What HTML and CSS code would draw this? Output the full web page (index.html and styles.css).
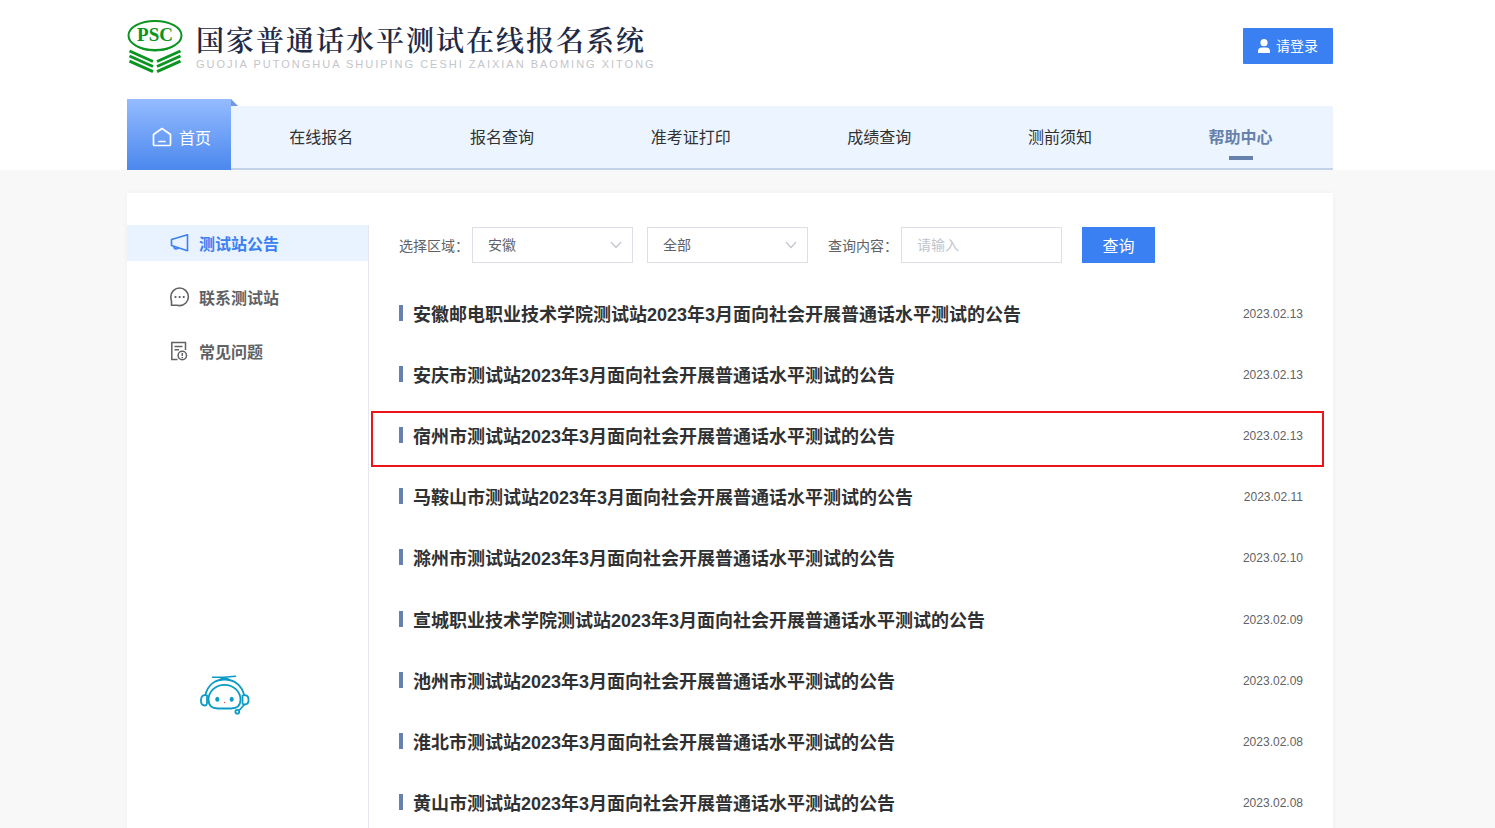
FILE: index.html
```html
<!DOCTYPE html>
<html lang="zh-CN">
<head>
<meta charset="utf-8">
<meta name="viewport" content="width=device-width, initial-scale=1">
<title>国家普通话水平测试在线报名系统</title>
<link rel="stylesheet" href="styles.css">
</head>
<body>
<header class="header">
  <div class="container">
    <div class="brand-bar">
      <a class="brand" href="#">
        <svg class="brand-logo" viewBox="0 0 56 56" aria-hidden="true">
          <ellipse cx="28" cy="17.500" rx="26.500" ry="14.500" fill="#fff" stroke="#0a9420" stroke-width="2"/>
          <path d="M5 25.500Q28 40 51 25.500Q42 33.500 28 33.500Q14 33.500 5 25.500Z" fill="#0a9420"/>
          <text class="brand-mark" x="28" y="23" text-anchor="middle">PSC</text>
          <g fill="none" stroke="#0a9420" stroke-width="3">
            <path d="M2.500 33L26 43.500M2.500 38L26 48.500M2.500 43.200L26 53.700"/>
            <path d="M53.500 33L30 43.500M53.500 38L30 48.500M53.500 43.200L30 53.700"/>
          </g>
        </svg>
        <span class="brand-text">
          <span class="brand-name">国家普通话水平测试在线报名系统</span>
          <span class="brand-pinyin">GUOJIA PUTONGHUA SHUIPING CESHI ZAIXIAN BAOMING XITONG</span>
        </span>
      </a>
      <button class="login" type="button">
        <svg width="14" height="14" viewBox="0 0 14 14" fill="#fff" aria-hidden="true"><circle cx="7" cy="3.700" r="3.600"/><path d="M1 14V12.500Q1 8.500 5 8.500H9Q13 8.500 13 12.500V14Z"/></svg>
        请登录
      </button>
    </div>
    <nav class="nav">
      <a class="nav-home" href="#">
        <svg width="20" height="20" viewBox="0 0 20 20" fill="none" stroke="#fff" stroke-width="1.700" stroke-linejoin="round" stroke-linecap="round" aria-hidden="true"><path d="M1.500 7.500L10 1.500L18.500 7.500V17.500Q18.500 18.500 17.500 18.500H2.500Q1.500 18.500 1.500 17.500Z"/><path d="M7 14.500H13"/></svg>
        首页
      </a>
      <div class="nav-links">
        <a class="nav-link" href="#">在线报名</a>
        <a class="nav-link" href="#">报名查询</a>
        <a class="nav-link" href="#">准考证打印</a>
        <a class="nav-link" href="#">成绩查询</a>
        <a class="nav-link" href="#">测前须知</a>
        <a class="nav-link is-active" href="#">帮助中心</a>
      </div>
    </nav>
  </div>
</header>

<div class="page">
  <main class="container card">
    <aside class="sidebar">
      <a class="side-link is-active" href="#">
        <svg width="20" height="20" viewBox="0 0 20 20" fill="none" stroke="currentColor" stroke-width="1.600" stroke-linejoin="round" aria-hidden="true"><path d="M1.500 6.500L17.500 1.800V17.800L1.500 12.500Z"/><path d="M4 13.500Q4 16 6 16Q8 16 8.300 14.800"/></svg>
        测试站公告
      </a>
      <a class="side-link" href="#">
        <svg width="20" height="20" viewBox="0 0 20 20" fill="none" stroke="currentColor" stroke-width="1.600" stroke-linejoin="round" aria-hidden="true"><path d="M1.500 18.300V14Q.8 12 .8 9.800A8.800 8.800 0 1 1 9.600 18.600Q8 18.600 7 18.300Z"/><path d="M4.600 10H6.400M8.700 10H10.500M12.800 10H14.600" stroke-width="1.800"/></svg>
        联系测试站
      </a>
      <a class="side-link" href="#">
        <svg width="20" height="20" viewBox="0 0 20 20" fill="none" stroke="currentColor" stroke-width="1.500" aria-hidden="true"><path d="M7.500 18.500H1.800V1.500H15.500V9M4.500 5.500H12.500M4.500 8.800H9"/><circle cx="12.300" cy="14.500" r="4.200"/><path d="M12.300 12V15M12.300 16V17.200"/></svg>
        常见问题
      </a>
    </aside>

    <section class="content">
      <form class="filters">
        <label class="filter-label" for="province">选择区域：</label>
        <span class="select">
          <select class="field" id="province"><option>安徽</option></select>
          <svg class="select-arrow" viewBox="0 0 12 8" aria-hidden="true"><path d="M1 1L6 6.500L11 1" fill="none" stroke="#c0c4cc" stroke-width="1.200"/></svg>
        </span>
        <span class="select">
          <select class="field" aria-label="测试站"><option>全部</option></select>
          <svg class="select-arrow" viewBox="0 0 12 8" aria-hidden="true"><path d="M1 1L6 6.500L11 1" fill="none" stroke="#c0c4cc" stroke-width="1.200"/></svg>
        </span>
        <label class="filter-label filter-query" for="keyword">查询内容：</label>
        <input class="field" id="keyword" type="text" placeholder="请输入">
        <button class="search" type="button">查询</button>
      </form>

      <ul class="notices">
        <li class="notice"><a class="notice-title" href="#">安徽邮电职业技术学院测试站2023年3月面向社会开展普通话水平测试的公告</a><time class="notice-date">2023.02.13</time></li>
        <li class="notice"><a class="notice-title" href="#">安庆市测试站2023年3月面向社会开展普通话水平测试的公告</a><time class="notice-date">2023.02.13</time></li>
        <li class="notice is-marked"><a class="notice-title" href="#">宿州市测试站2023年3月面向社会开展普通话水平测试的公告</a><time class="notice-date">2023.02.13</time></li>
        <li class="notice"><a class="notice-title" href="#">马鞍山市测试站2023年3月面向社会开展普通话水平测试的公告</a><time class="notice-date">2023.02.11</time></li>
        <li class="notice"><a class="notice-title" href="#">滁州市测试站2023年3月面向社会开展普通话水平测试的公告</a><time class="notice-date">2023.02.10</time></li>
        <li class="notice"><a class="notice-title" href="#">宣城职业技术学院测试站2023年3月面向社会开展普通话水平测试的公告</a><time class="notice-date">2023.02.09</time></li>
        <li class="notice"><a class="notice-title" href="#">池州市测试站2023年3月面向社会开展普通话水平测试的公告</a><time class="notice-date">2023.02.09</time></li>
        <li class="notice"><a class="notice-title" href="#">淮北市测试站2023年3月面向社会开展普通话水平测试的公告</a><time class="notice-date">2023.02.08</time></li>
        <li class="notice"><a class="notice-title" href="#">黄山市测试站2023年3月面向社会开展普通话水平测试的公告</a><time class="notice-date">2023.02.08</time></li>
      </ul>
    </section>
  </main>
</div>

<button class="assistant" type="button" aria-label="在线客服">
  <svg width="50" height="42" viewBox="0 0 50 42" fill="none" stroke="#0c9bc6" stroke-width="1.800" stroke-linecap="round" aria-hidden="true">
    <path d="M12.500 3.200H24L35.500 2.300" stroke-width="1.600"/>
    <path d="M20.500 5.500Q24.500 3.500 28.500 5.500" stroke-width="2.200"/>
    <path d="M5.500 20.500C8 11 15 5.500 24.500 5.500S41.500 11 44 20.500"/>
    <path d="M24.500 10.800C15 10.800 8.500 18 8.500 25.500C8.500 32 12.500 34.500 18 34.500H31C36.500 34.500 40.500 32 40.500 25.500C40.500 18 34 10.800 24.500 10.800Z"/>
    <path d="M7 21.500Q1.500 20 1 25.500Q.5 31.500 5 31.500Q6.500 31.500 7 29.500Z"/>
    <path d="M42.500 21.500Q48 20 48.500 25Q49 30.500 44.500 30.500Q42.500 30.500 42.500 29Z"/>
    <path d="M44 31L39 36.500"/><circle cx="37.300" cy="37.800" r="1.900"/>
    <g fill="#0c9bc6" stroke="none"><ellipse cx="17.300" cy="25.200" rx="2" ry="2.500"/><ellipse cx="31.700" cy="25.200" rx="2" ry="2.500"/></g>
    <circle cx="24.500" cy="28.500" r=".7" fill="#ef4a4a" stroke="none"/>
  </svg>
</button>
</body>
</html>
```
FILE: styles.css
```css
*,
*::before,
*::after {
  box-sizing: border-box;
}

body {
  display: flex;
  flex-direction: column;
  height: 100vh;
  margin: 0;
  overflow: hidden;
  background: #f8f8f8;
  color: #606266;
  font-family: "Liberation Sans", "Noto Sans CJK SC", sans-serif;
  font-size: 14px;
}

a {
  color: inherit;
  text-decoration: none;
}

button,
input,
select {
  font: inherit;
}

svg {
  flex: none;
}

.header,
.page {
  padding-right: 35px;
}

.header {
  flex: none;
  background: #fff;
}

.page {
  display: flex;
  flex: 1 0 auto;
  padding-top: 23px;
}

.container {
  width: 100%;
  max-width: 1206px;
  margin: 0 auto;
}

.brand-bar {
  display: flex;
  align-items: flex-start;
  justify-content: space-between;
  height: 99px;
  padding-top: 18px;
}

.brand {
  display: flex;
  gap: 13px;
}

.brand-logo {
  width: 56px;
  height: 56px;
}

.brand-mark {
  fill: #0a9420;
  font-family: "Liberation Serif", serif;
  font-size: 19px;
  font-weight: 700;
}

.brand-text {
  display: flex;
  flex-direction: column;
  padding-top: 3px;
}

.brand-name {
  color: #1f2b46;
  font-family: "Noto Serif CJK SC", "Noto Sans CJK SC", serif;
  font-size: 28px;
  font-weight: 600;
  letter-spacing: 2px;
  line-height: 36px;
}

.brand-pinyin {
  color: #c3c5cb;
  font-size: 11px;
  letter-spacing: 2px;
  line-height: 14px;
}

.login {
  display: flex;
  align-items: center;
  gap: 5px;
  height: 36px;
  margin-top: 10px;
  padding: 0 15px 0 14px;
  border: 0;
  border-radius: 1px;
  background: #3a80f2;
  color: #fff;
  line-height: 20px;
}

.nav {
  display: flex;
  align-items: flex-end;
}

.nav-home {
  position: relative;
  display: flex;
  flex: none;
  align-items: center;
  justify-content: center;
  gap: 7px;
  width: 104px;
  height: 71px;
  padding: 4px 0 0 5px;
  background: linear-gradient(#94bbff, #4b88ee);
  color: #fff;
  font-size: 16px;
}

.nav-home::after {
  position: absolute;
  top: 0;
  left: 100%;
  border-bottom: 7px solid #6e98e0;
  border-right: 7px solid transparent;
  content: "";
}

.nav-links {
  display: flex;
  flex: 1;
  justify-content: space-around;
  height: 64px;
  padding-right: 2px;
  border-bottom: 2px solid #c3d2e6;
  background: #ecf5ff;
}

.nav-link {
  position: relative;
  height: 62px;
  color: #303133;
  font-size: 16px;
  line-height: 64px;
}

.nav-link.is-active {
  color: #6681ab;
  font-weight: 700;
}

.nav-link.is-active::after {
  position: absolute;
  bottom: 8px;
  left: 50%;
  width: 24px;
  height: 4px;
  margin-left: -12px;
  background: #6681ab;
  content: "";
}

.card {
  display: flex;
  padding-top: 32px;
  background: #fff;
  box-shadow: 0 0 6px rgba(0, 0, 0, 0.04);
}

.sidebar {
  display: flex;
  flex: none;
  flex-direction: column;
  gap: 18px;
  width: 242px;
  border-right: 1px solid #e4e7ed;
}

.side-link {
  display: flex;
  align-items: center;
  gap: 9px;
  height: 36px;
  padding-left: 43px;
  font-size: 16px;
  font-weight: 700;
}

.side-link.is-active {
  background: #e9f2ff;
  color: #3a80f2;
}

.content {
  flex: 1;
  min-width: 0;
  padding: 2px 30px 0;
}

.filters {
  display: flex;
  align-items: center;
}

.filter-label {
  width: 73px;
  white-space: nowrap;
}

.filter-query {
  margin-left: 6px;
}

.select {
  position: relative;
  margin-right: 14px;
}

.field {
  width: 161px;
  height: 36px;
  padding: 0 15px;
  border: 1px solid #dcdfe6;
  border-radius: 0;
  appearance: none;
  background: #fff;
  color: #606266;
}

.field::placeholder {
  color: #c0c4cc;
}

.select-arrow {
  position: absolute;
  top: 14px;
  right: 11px;
  width: 12px;
  height: 8px;
  pointer-events: none;
}

.search {
  width: 73px;
  height: 36px;
  margin-left: 20px;
  padding: 0;
  border: 0;
  background: #3a80f2;
  color: #fff;
  font-size: 16px;
}

.notices {
  display: grid;
  grid-auto-rows: 1fr;
  min-height: 551px;
  margin: 19px 0 0;
  padding: 0;
  list-style: none;
}

.notice {
  position: relative;
  display: flex;
  align-items: center;
  justify-content: space-between;
}

.notice-title {
  display: flex;
  align-items: center;
  gap: 10px;
  color: #303133;
  font-size: 18px;
  font-weight: 700;
}

.notice-title::before {
  width: 4px;
  height: 16px;
  background: #6681ab;
  content: "";
}

.notice-date {
  padding-top: 2px;
  font-size: 12px;
}

.is-marked::after {
  position: absolute;
  top: 7px;
  right: -21px;
  left: -28px;
  height: 56px;
  border: 2px solid #ec141c;
  content: "";
  pointer-events: none;
}

.assistant {
  position: fixed;
  bottom: 112px;
  left: 200px;
  padding: 0;
  border: 0;
  background: none;
  line-height: 0;
}
```
